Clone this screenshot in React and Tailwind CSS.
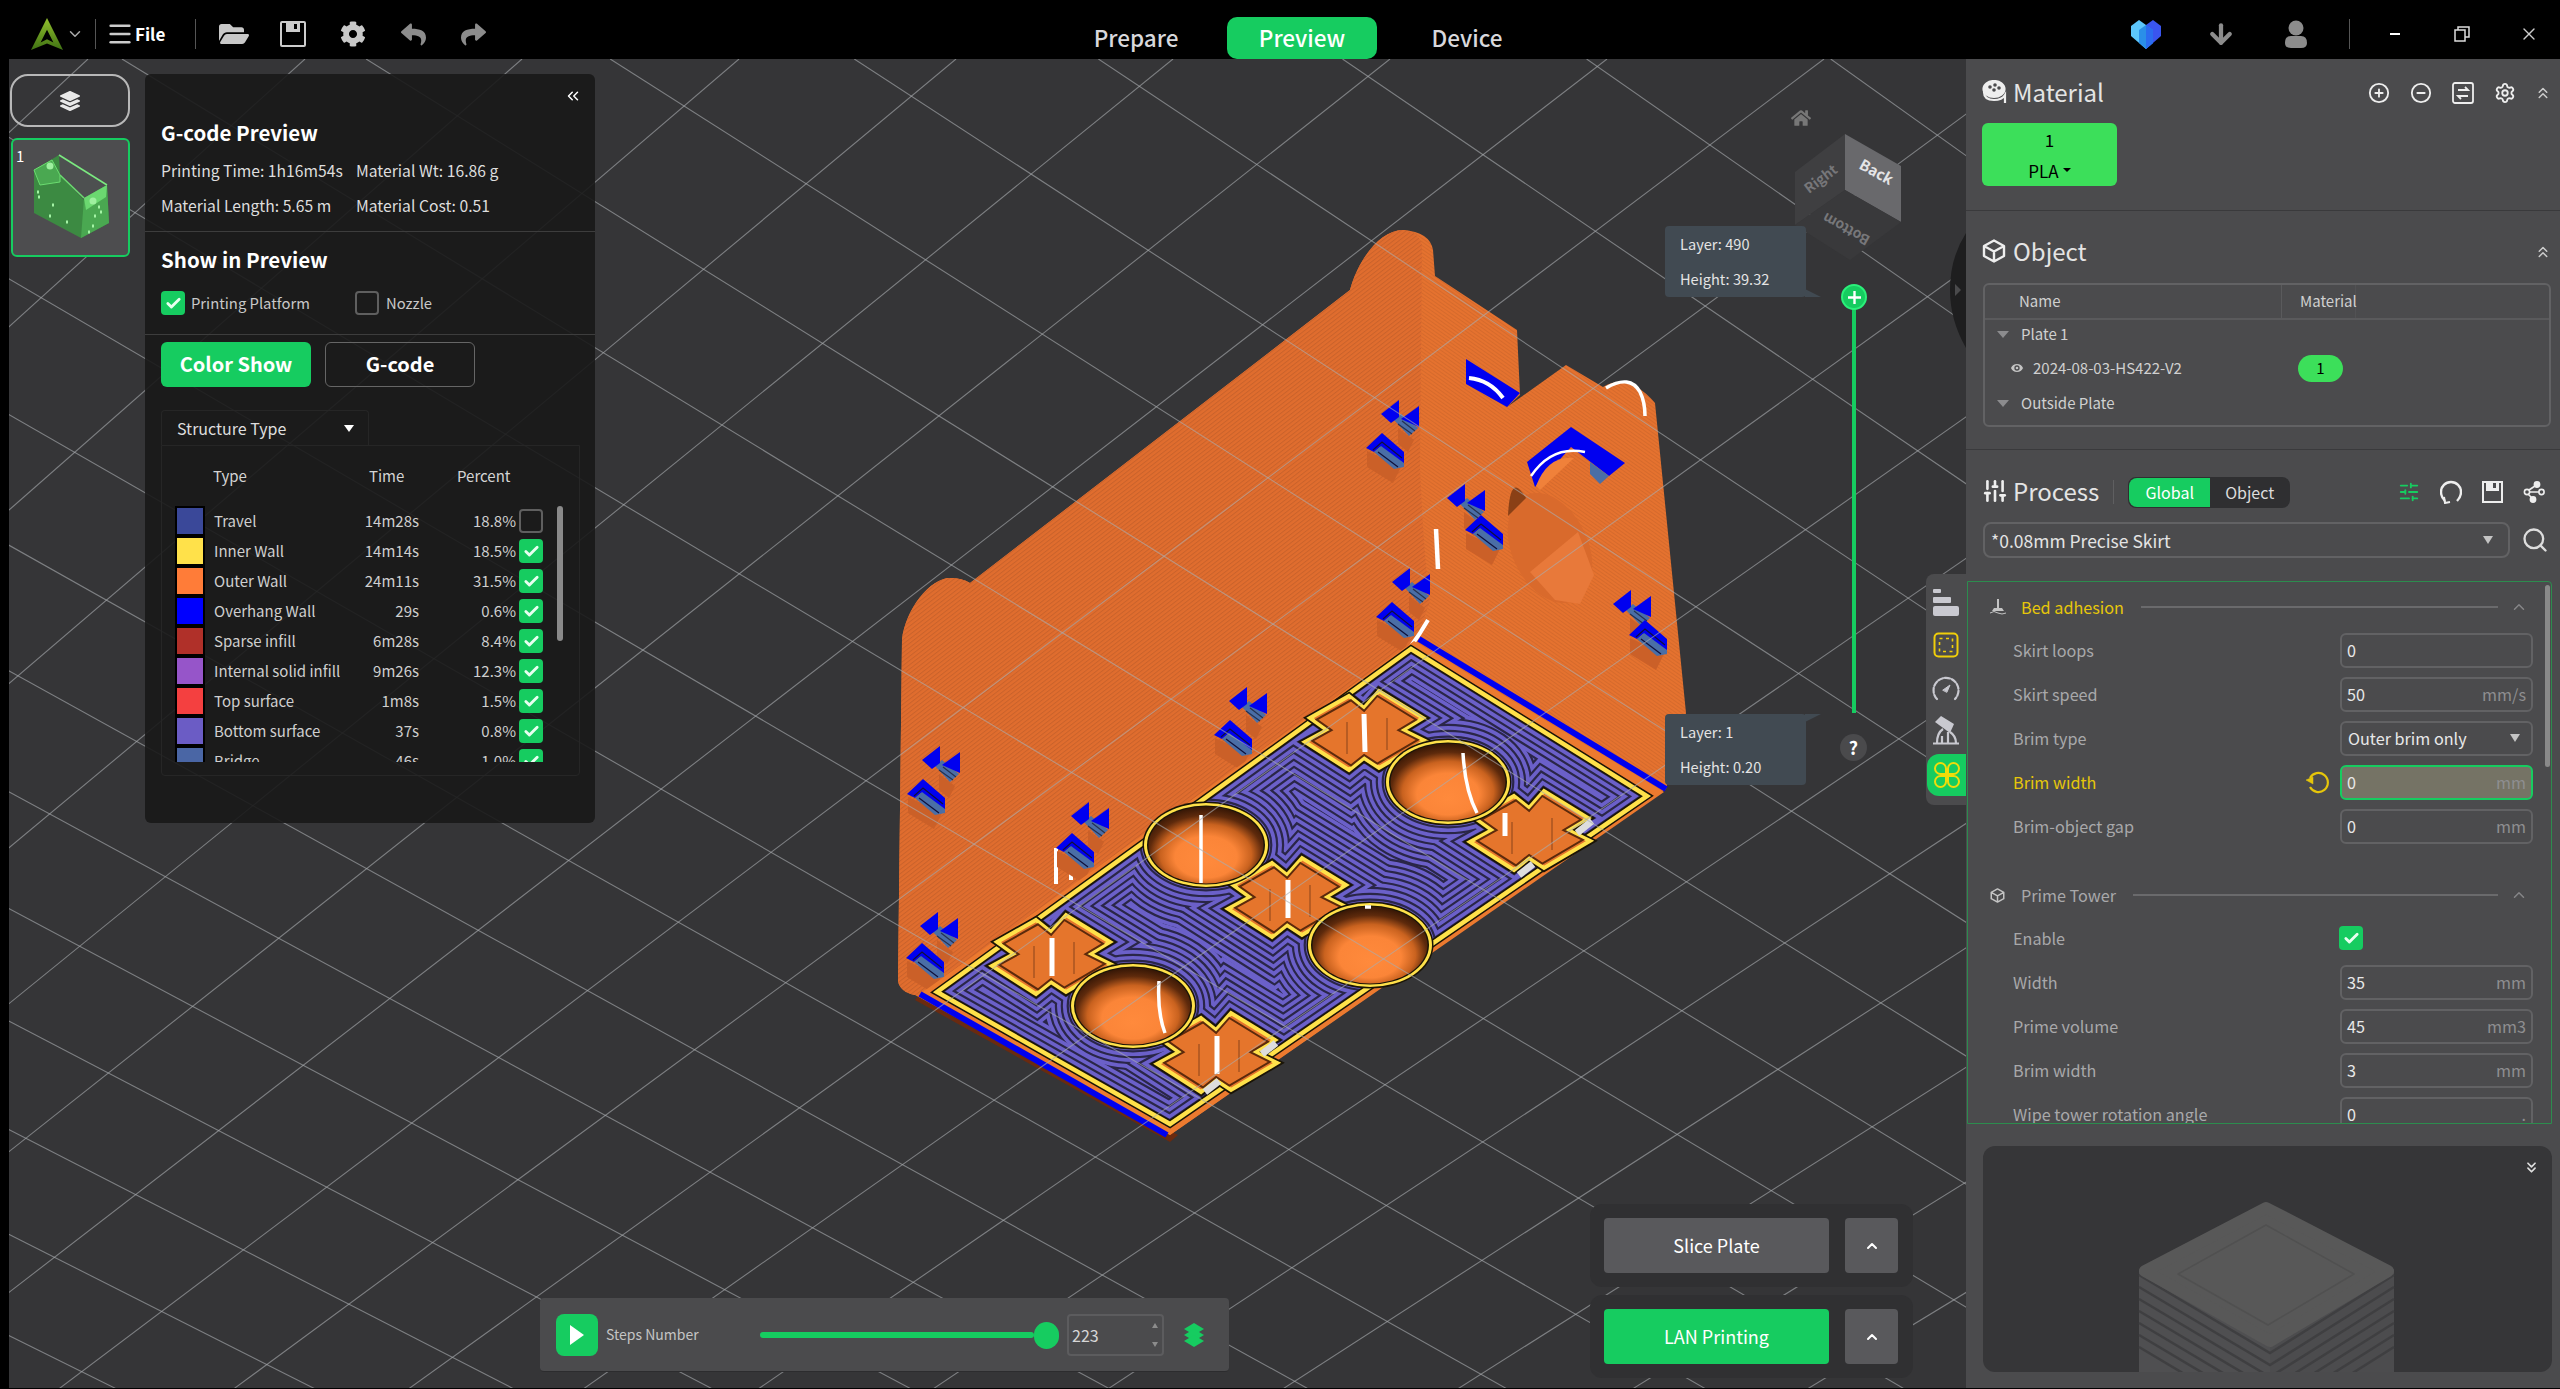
import React from 'react';
import {
  ArrowDown, Check, ChevronDown, ChevronUp, ChevronsDown, ChevronsLeft, ChevronsUp,
  CircleMinus, CirclePlus, Eye, Menu, Search, Settings, SlidersHorizontal, SlidersVertical, X,
} from 'lucide-react';
import { FaCog, FaFolderOpen, FaHome, FaLayerGroup, FaReply, FaShare } from 'react-icons/fa';

const structureRows = [
  { name: 'Travel', time: '14m28s', pct: '18.8%', color: '#3a4899', on: false },
  { name: 'Inner Wall', time: '14m14s', pct: '18.5%', color: '#ffe14a', on: true },
  { name: 'Outer Wall', time: '24m11s', pct: '31.5%', color: '#ff7c38', on: true },
  { name: 'Overhang Wall', time: '29s', pct: '0.6%', color: '#0000ff', on: true },
  { name: 'Sparse infill', time: '6m28s', pct: '8.4%', color: '#b03029', on: true },
  { name: 'Internal solid infill', time: '9m26s', pct: '12.3%', color: '#9655c9', on: true },
  { name: 'Top surface', time: '1m8s', pct: '1.5%', color: '#f44040', on: true },
  { name: 'Bottom surface', time: '37s', pct: '0.8%', color: '#6b5cc5', on: true },
  { name: 'Bridge', time: '46s', pct: '1.0%', color: '#4a66a5', on: true },
];

// model data, all in page pixels
const platePts = '1411,649 1647,796 1170,1124 937,992';
const crossShape = [[-16, -36], [-1, -24], [14, -41], [58, -14], [38, -2], [60, 9], [14, 36], [-1, 26], [-16, 38], [-60, 10], [-38, -2], [-55, -14]];
const crosses = [[1365, 732], [1530, 832], [1288, 899], [1052, 956], [1217, 1054]];
const holes = [[1448, 782], [1206, 845], [1370, 945], [1133, 1006]];
const notches = [
  [1400, 418, 1385, 449], [1466, 502, 1484, 531], [1411, 586, 1395, 618], [1632, 608, 1648, 636],
  [1248, 705, 1233, 736], [941, 764, 926, 795], [1090, 820, 1075, 849], [939, 930, 925, 959],
];
const crossPts = (cx, cy, k = 1) => crossShape.map(([x, y]) => `${cx + x * k},${cy + y * k}`).join(' ');
const infillSteps = Array.from({ length: 25 }, (_, i) => 146 - i * 5.9);

const Outlines = ({ width, color }) => (
  <g fill="none" stroke={color} strokeWidth={width} strokeLinejoin="miter" strokeMiterlimit="12">
    <polygon points={platePts} />
    {holes.map(([x, y]) => <ellipse key={x} cx={x} cy={y} rx="62" ry="42" />)}
    {crosses.map(([x, y]) => <polygon key={x} points={crossPts(x, y)} />)}
  </g>
);

const Notch = ({ n }) => (
  <g>
    <polygon points={`${n[0] - 2},${n[1] + 10} ${n[0] + 14},${n[1] + 22} ${n[0] + 8},${n[1] + 34} ${n[0] - 2},${n[1] + 26}`} fill="#cb6028" />
    <polygon points={`${n[2] - 18},${n[3] + 2} ${n[2] + 16},${n[3] + 18} ${n[2] + 8},${n[3] + 34} ${n[2] - 18},${n[3] + 18}`} fill="#cb6028" />
    <g transform={`translate(${n[0]} ${n[1]})`}>
      <polygon points="-6,2 1,-4 18,10 9,18" fill="#4a6ea6" />
      <polygon points="-19,-4 -1,-18 -1,-1 -9,5" fill="#0000f0" />
      <polygon points="1,1 19,-12 19,9" fill="#0000f0" />
      <path d="M-2 6 L12 16 M2 3 L15 13" stroke="#27324f" strokeWidth="1.2" />
    </g>
    <g transform={`translate(${n[2]} ${n[3]})`}>
      <polygon points="-19,-1 -3,-16 19,3 19,15 -5,-2 -11,3" fill="#0000f0" />
      <polygon points="-11,3 -4,-3 19,14 19,18 9,20" fill="#4a6ea6" />
      <path d="M-7 3 L13 18 M-12 1 L-3 -7 L17 9" stroke="#10103a" strokeWidth="1.2" fill="none" />
    </g>
  </g>
);

const GridLines = () => {
  const back = Array.from({ length: 22 }, (_, n) => 122 + 244.1 * (n - 13));
  const fwd = Array.from({ length: 21 }, (_, n) => 88 + 217 * n);
  return (
    <g stroke="#a9adb0" strokeOpacity="0.62" strokeWidth="1.1">
      {back.map((b) => <line key={b} x1={b} y1="59" x2={b + (1.656 - 0.00014 * b) * 1330} y2="1389" />)}
      {fwd.map((a) => <line key={a} x1={a} y1="59" x2={a - (1.061 + 0.000146 * a) * 1330} y2="1389" />)}
    </g>
  );
};

const Model = () => (
  <svg className="absolute inset-0 w-full h-full" viewBox="9 59 1957 1329">
    <defs>
      <pattern id="wallL" width="3.4" height="3.4" patternUnits="userSpaceOnUse" patternTransform="rotate(-37.6)">
        <rect width="3.4" height="3.4" fill="#e06d2e" />
        <rect width="3.4" height="1" fill="#c9622b" />
      </pattern>
      <pattern id="wallR" width="3" height="3" patternUnits="userSpaceOnUse" patternTransform="rotate(35)">
        <rect width="3" height="3" fill="#e5722f" />
        <rect width="3" height="0.8" fill="#d2682b" />
      </pattern>
      <radialGradient id="holeFill" cx="0.5" cy="0.58" r="0.6" fx="0.5" fy="0.72">
        <stop offset="0" stopColor="#ff8a3c" />
        <stop offset="0.45" stopColor="#fb8538" />
        <stop offset="0.66" stopColor="#c9621f" />
        <stop offset="0.82" stopColor="#5e2a0c" />
        <stop offset="1" stopColor="#2c1204" />
      </radialGradient>
      <clipPath id="plateClip"><polygon points={platePts} /></clipPath>
    </defs>

    <path d="M915 1000 L1170 1142 L1178 1135 L920 994 Z" fill="#6a2a10" />
    <path d="M898 981 L902 640 C905 610 930 578 950 578 Q962 578 970 583 L1350 290 C1358 260 1380 230 1403 230 Q1430 232 1433 250 L1435 276 L1517 330 L1520 395 L1507 407 L1566 365 L1603 387 Q1628 372 1655 403 L1686 713 L1666 789 L1170 1135 L915 995 Q900 992 898 981 Z" fill="url(#wallR)" />
    <path d="M898 981 L902 640 C905 610 930 578 950 578 Q962 578 970 583 L1350 290 C1358 260 1380 230 1403 230 Q1418 231 1422 245 L1420 468 Q1424 560 1430 602 L1414 644 L920 994 L915 995 Q900 992 898 981 Z" fill="url(#wallL)" />

    <ellipse cx="1550" cy="548" rx="38" ry="58" transform="rotate(-25 1550 548)" fill="#d96a2c" />
    <polygon points="1530,572 1578,532 1594,575 1580,604 1555,600" fill="#e8793a" />
    <path d="M1526 498 Q1519 505 1508 516 Q1510 470 1526 498" fill="#8a4016" />

    {/* slot and arch on the right wall */}
    <polygon points="1466,359 1520,393 1507,407 1466,384" fill="#0000f0" />
    <path d="M1469 378 Q1490 380 1503 398" stroke="#fff" strokeWidth="4" fill="none" />
    <polygon points="1527,462 1571,427 1625,463 1609,476 1571,447 1535,487" fill="#0000f0" />
    <path d="M1531 476 Q1552 445 1585 452" stroke="#fff" strokeWidth="2.5" fill="none" />
    <path d="M1536 486 Q1548 455 1574 458 L1540 490 Z" fill="#f0813a" />
    <polygon points="1590,462 1609,476 1600,484 1590,474" fill="#4a6ea6" />
    <path d="M1436 529 L1438 569" stroke="#fff" strokeWidth="4.5" />
    <path d="M1428 620 Q1420 634 1411 646" stroke="#fff" strokeWidth="4" fill="none" />
    <path d="M1606 388 Q1630 374 1640 392 Q1645 402 1645 416" stroke="#fff" strokeWidth="3.5" fill="none" />
    <path d="M1056 848 L1056 884 M1071 862 L1071 880" stroke="#fff" strokeWidth="4" />

    {notches.map((n) => <Notch key={n[0]} n={n} />)}

    {/* plate */}
    <polygon points="1414,641 1664,792 1170,1135 920,994" fill="#ec7a2f" />
    <path d="M1419 639 L1666 789" stroke="#0000f0" strokeWidth="6" />
    <path d="M920 994 L1167 1135" stroke="#0000f0" strokeWidth="6" />
    <g clipPath="url(#plateClip)">
      <polygon points={platePts} fill="#6b60c9" />
      {infillSteps.map((d) => (
        <g key={d}>
          <Outlines width={2 * d} color="#2a2648" />
          <Outlines width={2 * (d - 2.2)} color="#6b60c9" />
        </g>
      ))}
    </g>
    <polygon points={platePts} fill="none" stroke="#1a1406" strokeWidth="7.5" strokeLinejoin="miter" />
    <polygon points={platePts} fill="none" stroke="#ffe14a" strokeWidth="4.5" strokeLinejoin="miter" />

    {crosses.map(([x, y]) => (
      <g key={x}>
        <polygon points={crossPts(x, y)} fill="#e5752c" stroke="#1a1406" strokeWidth="7.5" strokeLinejoin="miter" />
        <polygon points={crossPts(x, y)} fill="#e5752c" stroke="#ffe14a" strokeWidth="4" strokeLinejoin="miter" />
        <polygon points={crossPts(x, y, 0.88)} fill="#e5752c" stroke="#5c2a0c" strokeWidth="2" />
        <path d={`M${x - 18} ${y - 10} L${x - 18} ${y + 22} M${x + 22} ${y - 14} L${x + 22} ${y + 18}`} stroke="#a85420" strokeWidth="1.5" />
      </g>
    ))}
    {holes.map(([x, y]) => (
      <g key={x}>
        <ellipse cx={x} cy={y} rx="63.5" ry="43.5" fill="#1a1406" />
        <ellipse cx={x} cy={y} rx="62" ry="42" fill="#ffe14a" />
        <ellipse cx={x} cy={y} rx="59" ry="39.5" fill="#1a1406" />
        <ellipse cx={x} cy={y} rx="57.5" ry="38.5" fill="url(#holeFill)" />
      </g>
    ))}
    <path d="M1364 714 L1365 752 M1288 880 L1288 918 M1052 938 L1052 976 M1217 1036 L1217 1074 M1505 813 L1505 836" stroke="#fff" strokeWidth="5" />
    <path d="M1463 753 Q1465 790 1477 813 M1201 815 L1201 883 M1159 981 Q1157 1012 1165 1033 M1365 907 L1371 907" stroke="#fff" strokeWidth="3.5" fill="none" />
    <path d="M1577 833 L1592 821 M1519 875 L1533 864 M1262 1054 L1276 1043 M1205 1092 L1219 1081" stroke="#ddd" strokeWidth="7" />

    <GridLines />

    {/* nav cube */}
    <polygon points="1845,134 1795,172 1795,225 1845,190" fill="#3f3f41" />
    <polygon points="1845,134 1901,166 1901,222 1845,190" fill="#69696c" />
    <polygon points="1845,190 1901,222 1850,260 1795,225" fill="#39393b" />
    <text transform="translate(1809 194) rotate(-37)" className="text-[14px] font-bold" fill="#77777a">Right</text>
    <text transform="translate(1858 168) rotate(29)" className="text-[15px] font-bold" fill="#e4e4e6">Back</text>
    <text transform="translate(1871 237) rotate(209)" className="text-[14px] font-bold" fill="#77777a">Bottom</text>
    <path d="M1966 233 Q1950 258 1950 290 Q1950 320 1966 348 Z" fill="#1e1e1f" />
    <path d="M1955 284 L1961 290 L1955 296 Z" fill="#4a4a4c" />
  </svg>
);

const Thumb = () => (
  <svg className="w-full h-full" viewBox="13 140 115 115">
    {/* far inner walls */}
    <polygon points="34,170 59,155 107,185 109,223 81,238 34,213" fill="#3c8a42" />
    <polygon points="59,155 107,185 84,200 60,175" fill="#4d5050" />
    <path d="M59 155 L107 185" stroke="#7bea80" strokeWidth="1.5" />
    <path d="M60 175 L84 198" stroke="#6bdc70" strokeWidth="1.5" />
    <polygon points="34,170 52,160 60,175 60,182 40,185" fill="#4aa851" stroke="#6bdc70" />
    <polygon points="84,198 107,185 109,223 81,238" fill="#4aa851" />
    <polygon points="84,198 107,185 106,197 86,210" fill="#6bd870" />
    <circle cx="50" cy="166" r="3.5" fill="#9ef09f" /><circle cx="93" cy="201" r="3.5" fill="#9ef09f" />
    <path d="M37 192 h2 M38 197 h2 M49 216 h2 M66 222 h2 M52 205 h2 M94 216 h2 M100 212 h2 M92 226 h2 M88 232 h2 M98 207 h2" stroke="#a4f4a5" strokeWidth="3" />
  </svg>
);

const Tick = ({ on }) => (
  on ? (
    <span className="w-6 h-6 rounded bg-[#16cc60] flex items-center justify-center shrink-0">
      <Check size={17} strokeWidth={4} className="text-[#e8fff0]" />
    </span>
  ) : (
    <span className="block w-6 h-6 rounded border-2 border-[#5f5f5f] shrink-0" />
  )
);

const TopBar = () => (
  <div className="h-[59px] bg-black flex items-center relative text-[#c8c8c8] pt-[9px]">
    <svg width="32" height="32" viewBox="0 0 30 30" className="ml-[31px]">
      <defs>
        <linearGradient id="logoG" x1="0" y1="0" x2="0" y2="1">
          <stop offset="0" stopColor="#93c02e" /><stop offset="1" stopColor="#3f7213" />
        </linearGradient>
      </defs>
      <path fillRule="evenodd" d="M15 0 L30 30 L15 24 L0 30 Z M15 11 L21 23 L15 20 L9 23 Z" fill="url(#logoG)" />
    </svg>
    <ChevronDown size={18} className="ml-[3px] text-[#aaa]" />
    <span className="ml-[11px] w-px h-[30px] bg-[#555]" />
    <Menu size={28} strokeWidth={2.2} className="ml-[10px] text-[#ccc]" />
    <span className="ml-[1px] text-[17px] font-bold text-white w-[30px]">File</span>
    <span className="ml-[30px] w-px h-[30px] bg-[#555]" />
    <FaFolderOpen size={30} className="ml-[23px]" />
    <svg width="26" height="26" viewBox="0 0 26 26" className="ml-[31px]">
      <path d="M2 1 H24 Q25 1 25 2 V24 Q25 25 24 25 H2 Q1 25 1 24 V2 Q1 1 2 1 Z" fill="none" stroke="#ccc" strokeWidth="2" />
      <rect x="6" y="1" width="14" height="10" fill="#ccc" />
      <rect x="14" y="3" width="3" height="5" fill="#000" />
    </svg>
    <FaCog size={26} className="ml-[34px]" />
    <FaReply size={25} className="ml-[35px] text-[#8c8c8c]" />
    <FaShare size={25} className="ml-[35px] text-[#8c8c8c]" />

    <div className="absolute left-[1076px] top-[17px] flex text-[22.5px] font-medium">
      <span className="w-[120px] text-center leading-[41px] text-[#d8d8dc]">Prepare</span>
      <span className="ml-[31px] w-[150px] h-[42px] leading-[41px] rounded-[10px] bg-[#16cc60] text-center text-white">Preview</span>
      <span className="ml-[30px] w-[120px] text-center leading-[41px] text-[#d8d8dc]">Device</span>
    </div>

    <div className="ml-auto flex items-center">
      <svg width="30" height="30" viewBox="0 0 30 30">
        <polygon points="0,7 8,1 15,6 15,30 0,17" fill="#5cc6fb" />
        <polygon points="15,6 22,1 30,7 30,17 15,30" fill="#3a55ef" />
        <polygon points="8,11 15,6 22,11 22,24 15,30 8,24" fill="#2a8fe8" />
        <polygon points="15,6 22,11 22,24 15,30" fill="#2b6cf0" />
      </svg>
      <ArrowDown size={30} strokeWidth={3.4} className="ml-[45px] text-[#8c8c8c]" />
      <svg width="22" height="28" viewBox="0 0 22 28" className="ml-[49px]">
        <circle cx="11" cy="8" r="7.5" fill="#8c8c8c" />
        <path d="M0 23 Q0 16 6 16 H16 Q22 16 22 23 Q22 28 16 28 H6 Q0 28 0 23 Z" fill="#8c8c8c" />
      </svg>
      <span className="ml-[42px] w-px h-[30px] bg-[#555]" />
      <span className="ml-[40px] w-[10px] h-[1.5px] bg-white" />
      <svg width="16" height="16" viewBox="0 0 16 16" className="ml-[54px]">
        <rect x="1" y="4" width="10" height="11" fill="none" stroke="#ddd" strokeWidth="1.5" />
        <path d="M4 4 V1 H15 V11 H11" fill="none" stroke="#ddd" strokeWidth="1.5" />
      </svg>
      <X size={20} strokeWidth={1.6} className="ml-[49px] mr-[21px] text-[#ccc]" />
    </div>
  </div>
);

const GcodePanel = () => (
  <div className="absolute left-[136px] top-[15px] w-[450px] h-[749px] rounded-md bg-[#181818]/90 text-[#dedede]">
    <div className="h-[158px] border-b border-[#3d3d3d] pl-4">
      <div className="flex justify-end pt-[13px] pr-[13px]"><ChevronsLeft size={18} className="text-white" /></div>
      <h2 className="mt-[12px] text-[20.5px] font-bold leading-[30px] text-white">G-code Preview</h2>
      <div className="mt-[6px] grid grid-cols-[195px_auto] text-[15.7px] leading-[35px]">
        <span>Printing Time: 1h16m54s</span><span>Material Wt: 16.86 g</span>
        <span>Material Length: 5.65 m</span><span>Material Cost: 0.51</span>
      </div>
    </div>
    <div className="h-[103px] border-b border-[#3d3d3d] pl-4 pt-[12px]">
      <h2 className="text-[20.5px] font-bold leading-[30px] text-white">Show in Preview</h2>
      <div className="mt-[17px] flex items-center text-[14.8px] text-[#c8c8c8]">
        <Tick on />
        <span className="ml-[6px] w-[164px]">Printing Platform</span>
        <Tick on={false} />
        <span className="ml-[7px]">Nozzle</span>
      </div>
    </div>
    <div className="pl-4 pt-[7px] flex gap-[14px] text-[20px] font-bold text-white">
      <button className="w-[150px] h-[45px] pb-[2px] rounded-md bg-[#16cc60]">Color Show</button>
      <button className="w-[150px] h-[45px] pb-[2px] rounded-md border border-[#666]">G-code</button>
    </div>
    <div className="ml-4 mt-[23px] w-[419px] text-[15px]">
      <div className="h-[35px] w-[208px] rounded-t border border-b-0 border-[#262626] flex items-center pl-[15px] pr-[14px] justify-between text-[16px]">
        Structure Type
        <span className="w-0 h-0 border-x-[5px] border-x-transparent border-t-[7px] border-t-white" />
      </div>
      <div className="h-[331px] rounded-b border border-[#262626]">
        <div className="h-[60px] pl-[51px] flex items-center text-[#d4d4d4]">
          <span className="w-[156px]">Type</span><span className="w-[88px]">Time</span><span>Percent</span>
        </div>
        <div className="flex">
          <div className="pl-[13px] w-[383px] h-[256px] overflow-hidden">
            {structureRows.map((r) => (
              <div key={r.name} className="h-[30px] flex items-center text-[#cfcfcf]">
                <span className="w-[30px] h-[30px] bg-black p-[2px] shrink-0">
                  <span className="block w-full h-full" style={{ backgroundColor: r.color }} />
                </span>
                <span className="ml-[9px] w-[145px] whitespace-nowrap">{r.name}</span>
                <span className="w-[60px] text-right">{r.time}</span>
                <span className="w-[97px] text-right">{r.pct}</span>
                <span className="ml-[3px]"><Tick on={r.on} /></span>
              </div>
            ))}
          </div>
          <span className="ml-[12px] w-[6px] h-[135px] rounded-full bg-[#8a8a8a]" />
        </div>
      </div>
    </div>
  </div>
);

const LayerTip = ({ top, layer, height, tail }) => (
  <div className={`absolute left-[1656px] ${top} w-[141px] h-[71px] rounded bg-[#414a52] text-[#e4e4e4] text-[14.6px] pl-[15px] leading-[36px]`}>
    <div className="h-[36px]">Layer: {layer}</div>
    <div className="h-[36px] -mt-px">Height: {height}</div>
    <svg width="16" height="8" viewBox="0 0 16 8" className={`absolute left-[141px] ${tail === 'bottom' ? 'bottom-0' : 'top-0'} -ml-px`}>
      <polygon points={tail === 'bottom' ? '0,0 16,8 0,8' : '0,8 16,0 0,0'} fill="#414a52" />
    </svg>
  </div>
);

const ToolStrip = () => (
  <div className="absolute left-[1917px] top-[515px] w-[40px] h-[231px] rounded-l-lg bg-[#4b4b4d] flex flex-col items-center pt-[15px]">
    <svg width="28" height="28" viewBox="0 0 28 28">
      <rect x="1" y="0" width="8" height="4" rx="1" fill="#c9c9d0" />
      <rect x="1" y="8" width="18" height="6" rx="1" fill="#c9c9d0" />
      <rect x="1" y="17" width="26" height="10" rx="2" fill="#c9c9d0" />
    </svg>
    <svg width="26" height="26" viewBox="0 0 26 26" className="mt-[15px]" fill="none">
      <rect x="1.5" y="1.5" width="23" height="23" rx="4" stroke="#f0ce0a" strokeWidth="2" />
      <rect x="6.5" y="6.5" width="13" height="13" stroke="#f0ce0a" strokeWidth="1.6" strokeDasharray="3 3.5" />
    </svg>
    <svg width="28" height="26" viewBox="0 0 28 26" className="mt-[17px]" fill="none" stroke="#c9c9d0" strokeWidth="2.2" strokeLinecap="round">
      <path d="M5 24 A12.5 12.5 0 1 1 23 24" strokeDasharray="5 2" />
      <path d="M11 15 L18 10 L15 17 Z" fill="#c9c9d0" strokeWidth="1" />
    </svg>
    <svg width="28" height="29" viewBox="0 0 28 29" className="mt-[15px]">
      <polygon points="3,6 9,0 22,8 18,17" fill="#c9c9d0" />
      <path d="M11 13 Q5 17 5 27 M16 16 L16 27 M18 16 Q24 20 24 27 M10 20 L10 27 M1 27.5 H27" stroke="#c9c9d0" strokeWidth="2.2" fill="none" />
    </svg>
    <div className="mt-[9px] ml-[1px] w-[39px] h-[42px] rounded-l-xl bg-[#16cc60] flex items-center justify-center">
      <svg width="26" height="26" viewBox="0 0 26 26" fill="none" stroke="#f0dc0a" strokeWidth="2">
        <path d="M12 12 H6.5 A5.5 5.5 0 1 1 12 6.5 Z M14 12 V6.5 A5.5 5.5 0 1 1 19.5 12 Z M12 14 V19.5 A5.5 5.5 0 1 1 6.5 14 Z M14 14 H19.5 A5.5 5.5 0 1 1 14 19.5 Z" />
      </svg>
    </div>
  </div>
);

const StepsBar = () => (
  <div className="absolute left-[531px] top-[1239px] w-[689px] h-[74px] rounded bg-[#4b4b4d] flex items-center pl-[16px] border-b border-[#2c2c2e]">
    <span className="w-[42px] h-[42px] rounded-lg bg-[#16cc60] flex items-center justify-center">
      <span className="w-0 h-0 border-y-[10px] border-y-transparent border-l-[14px] border-l-white" />
    </span>
    <span className="ml-2 w-[154px] text-[14px] text-[#c4c4c4]">Steps Number</span>
    <span className="relative w-[274px] h-[6px] rounded-full bg-[#16cc60]">
      <span className="absolute left-[274px] -top-[10px] w-[25px] h-[27px] rounded-full bg-[#16cc60]" />
    </span>
    <span className="ml-[33px] w-[97px] h-[42px] rounded border-2 border-[#5c5c5e] flex items-center justify-between pl-[3px] pr-[4px] text-[16px] text-[#d6d6d6]">
      223
      <span className="flex flex-col gap-[14px]">
        <span className="w-0 h-0 border-x-[3px] border-x-transparent border-b-[5px] border-b-[#8c8c8c]" />
        <span className="w-0 h-0 border-x-[3px] border-x-transparent border-t-[5px] border-t-[#8c8c8c]" />
      </span>
    </span>
    <svg width="24" height="24" viewBox="0 0 24 24" className="ml-[18px]" fill="#16cc60">
      <polygon points="12,0 22,6 12,12 2,6" /><polygon points="12,6 22,12 12,18 2,12" /><polygon points="12,12 22,18 12,24 2,18" />
    </svg>
  </div>
);

const ActionGroup = ({ top, label, primary }) => (
  <div className={`absolute left-[1581px] ${top} w-[323px] h-[83px] rounded-xl bg-[#303032] flex items-center pl-[14px] gap-[16px] text-[18px] text-white`}>
    <button className={`w-[225px] h-[55px] rounded ${primary ? 'bg-[#16cc60]' : 'bg-[#59595c]'}`}>{label}</button>
    <button className="w-[53px] h-[55px] rounded bg-[#59595c] flex items-center justify-center">
      <ChevronUp size={16} strokeWidth={3} className="text-white" />
    </button>
  </div>
);

const Viewport = () => (
  <div className="relative flex-1 bg-[#353537] overflow-hidden">
    <Model />
    <div className="absolute left-[1px] top-[15px] w-[120px] h-[53px] rounded-[18px] border-2 border-[#b8b8b8] flex items-center justify-center">
      <FaLayerGroup size={20} className="text-[#e8e8e8]" />
    </div>
    <div className="absolute left-[2px] top-[79px] w-[119px] h-[119px] rounded-md border-2 border-[#16cc60] bg-[#4d4d4f] overflow-hidden">
      <span className="absolute left-[3px] top-[5px] text-[15px] text-white z-10">1</span>
      <Thumb />
    </div>
    <GcodePanel />
    <FaHome size={20} className="absolute left-[1782px] top-[49px] text-[#777]" />
    <LayerTip top="top-[167px]" layer="490" height="39.32" tail="bottom" />
    <LayerTip top="top-[655px]" layer="1" height="0.20" tail="top" />
    <div className="absolute left-[1843px] top-[238px] w-[4px] h-[416px] bg-[#16cc60]" />
    <div className="absolute left-[1832px] top-[225px] w-[26px] h-[26px] rounded-full bg-[#16cc60] border-2 border-[#2bf07a] flex items-center justify-center text-white text-[22px] leading-none">
      <svg width="13" height="13" viewBox="0 0 13 13"><path d="M6.5 0 V13 M0 6.5 H13" stroke="#fff" strokeWidth="2.4" /></svg>
    </div>
    <div className="absolute left-[1831px] top-[675px] w-[27px] h-[27px] rounded-full bg-[#4a4a4c] flex items-center justify-center text-white font-bold text-[18px]">?</div>
    <ToolStrip />
    <StepsBar />
    <ActionGroup top="top-[1145px]" label="Slice Plate" />
    <ActionGroup top="top-[1236px]" label="LAN Printing" primary />
  </div>
);

const Spool = () => (
  <svg width="26" height="24" viewBox="0 0 26 24" fill="none" stroke="#eee" strokeWidth="2.2">
    <ellipse cx="12" cy="9" rx="10.5" ry="8" fill="#eee" />
    <circle cx="8" cy="7" r="1.8" fill="#4b4b4d" stroke="none" /><circle cx="13" cy="5" r="1.8" fill="#4b4b4d" stroke="none" />
    <circle cx="17" cy="8" r="1.8" fill="#4b4b4d" stroke="none" /><circle cx="12" cy="10" r="1.8" fill="#4b4b4d" stroke="none" />
    <path d="M2 12 Q2 20 12 20 Q20 20 23 15 V23" />
  </svg>
);

const Cube = ({ size = 24, color = '#eee' }) => (
  <svg width={size} height={size} viewBox="0 0 24 24" fill="none" stroke={color} strokeWidth="2.4" strokeLinejoin="round">
    <path d="M12 1.5 L22 7 V17 L12 22.5 L2 17 V7 Z M2 7 L12 12.5 L22 7 M12 12.5 V22.5" />
  </svg>
);

const PanelTitle = ({ icon, children }) => (
  <div className="h-[40px] pb-[2px] flex items-center text-[24px] text-[#e4e4e4] font-normal">
    <span className="w-[31px] flex">{icon}</span>{children}
  </div>
);

const Field = ({ label, value, unit, active }) => (
  <div className="h-[44px] flex items-center pl-[45px] pr-[18px] text-[16.2px] shrink-0">
    <span className={`flex-1 ${active ? 'text-[#e6c60a]' : 'text-[#a8a8aa]'}`}>{label}</span>
    {active && (
      <svg width="24" height="24" viewBox="0 0 24 24" className="mr-[11px]" fill="none" stroke="#e6c60a" strokeWidth="2.2">
        <path d="M5 8 A9.5 9.5 0 1 1 5 17" /><path d="M1 10 L8 7 L8 14 Z" fill="#e6c60a" strokeWidth="0.5" />
      </svg>
    )}
    <span className={`w-[193px] h-[35px] rounded-md flex items-center justify-between pl-[5px] pr-[5px] border-2 ${active ? 'border-[#16cc60] bg-[#757365]' : 'border-[#626264]'}`}>
      <span className="text-[#e8e8e8]">{value}</span>
      <span className="text-[#8e8e90]">{unit}</span>
    </span>
  </div>
);

const SectionHead = ({ icon, title, yellow, textWidth }) => (
  <div className="h-[28px] flex items-center pl-[22px] pr-[23px] text-[16.2px]">
    <span className="w-[31px] flex">{icon}</span>
    <span className={`shrink-0 ${textWidth} ${yellow ? 'text-[#e6c60a]' : 'text-[#a8a8aa]'}`}>{title}</span>
    <span className="flex-1 h-[2px] bg-[#6a6a6c]" />
    <ChevronUp size={18} className="ml-[12px] text-[#858587]" />
  </div>
);

const RightPanel = () => (
  <div className="w-[594px] bg-[#4b4b4d] text-[#e4e4e4]">
    <div className="h-[152px] border-b border-[#3a3a3c] pl-4 pt-[14px]">
      <div className="flex items-center pr-[8px]">
        <PanelTitle icon={<Spool />}>Material</PanelTitle>
        <div className="ml-auto flex items-center gap-[20px] text-[#eee]">
          <CirclePlus size={22} /><CircleMinus size={22} />
          <svg width="22" height="22" viewBox="0 0 22 22" fill="none" stroke="#eee" strokeWidth="1.8">
            <rect x="1" y="1" width="20" height="20" rx="2" /><path d="M6 8 H16 L13 5 M16 14 H6 L9 17" />
          </svg>
          <Settings size={22} />
          <ChevronsUp size={18} className="ml-[-2px] text-[#ccc]" />
        </div>
      </div>
      <div className="mt-[10px] w-[135px] h-[63px] rounded-md bg-[#3cdf5a] flex flex-col items-center justify-center text-[17px] text-black leading-[31px]">
        <span>1</span>
        <span className="flex items-center gap-[4px]">PLA<span className="w-0 h-0 border-x-[4px] border-x-transparent border-t-[4px] border-t-black" /></span>
      </div>
    </div>

    <div className="h-[239px] border-b border-[#3a3a3c] pl-4 pt-[21px]">
      <div className="flex items-center pr-[8px]">
        <PanelTitle icon={<Cube />}>Object</PanelTitle>
        <ChevronsUp size={18} className="ml-auto text-[#ccc]" />
      </div>
      <div className="ml-[1px] mt-[11px] w-[568px] h-[144px] rounded-md border-2 border-[#626264] text-[15px] text-[#d0d0d0]">
        <div className="h-[35px] border-b-2 border-[#5a5a5c] flex items-center">
          <span className="pl-[34px] w-[297px] h-full flex items-center border-r border-[#5a5a5c]">Name</span>
          <span className="pl-[18px] w-[74px] h-full flex items-center border-r border-[#525254]">Material</span>
        </div>
        <div className="h-[29px] flex items-center pl-[12px]">
          <span className="w-0 h-0 border-x-[6px] border-x-transparent border-t-[7px] border-t-[#8c8c8e]" />
          <span className="ml-[12px]">Plate 1</span>
        </div>
        <div className="h-[36px] flex items-center pl-[24px] pt-[2px]">
          <Eye size={16} fill="#c4c4c4" className="text-[#4b4b4d]" />
          <span className="ml-[8px] w-[265px]">2024-08-03-HS422-V2</span>
          <span className="w-[45px] h-[27px] rounded-full bg-[#3cdf5a] text-black flex items-center justify-center">1</span>
        </div>
        <div className="h-[36px] flex items-center pl-[12px]">
          <span className="w-0 h-0 border-x-[6px] border-x-transparent border-t-[7px] border-t-[#8c8c8e]" />
          <span className="ml-[12px]">Outside Plate</span>
        </div>
      </div>
    </div>

    <div className="pt-[22px]">
      <div className="pl-4 pr-[15px] flex items-center">
        <PanelTitle icon={<SlidersVertical size={26} strokeWidth={2.4} className="text-[#eee]" />}>Process</PanelTitle>
        <span className="ml-[14px] w-px h-[24px] bg-[#5f5f61]" />
        <div className="ml-[14px] w-[162px] h-[31px] rounded-lg bg-[#2f2f31] flex items-center p-px text-[16px] text-[#dcdcdc]">
          <span className="w-[81px] h-[29px] rounded-l-lg bg-[#16cc60] text-center leading-[28px] text-white">Global</span>
          <span className="flex-1 text-center">Object</span>
        </div>
        <div className="ml-auto flex items-center gap-[20px] text-[#eee]">
          <SlidersHorizontal size={22} className="text-[#16cc60]" />
          <svg width="22" height="24" viewBox="0 0 22 24" fill="none" stroke="#eee" strokeWidth="2.4">
            <path d="M5 21 Q1 17 1 12 A10 10 0 0 1 21 12 Q21 17 17 21" /><path d="M4 17 L5 23 L10 22" strokeWidth="2" />
          </svg>
          <svg width="21" height="22" viewBox="0 0 21 22" fill="none" stroke="#eee" strokeWidth="2">
            <rect x="1" y="1" width="19" height="20" /><rect x="5" y="1" width="11" height="8" fill="#eee" /><rect x="11" y="2" width="3" height="5" fill="#4b4b4d" stroke="none" />
          </svg>
          <svg width="22" height="22" viewBox="0 0 22 22" fill="#eee" stroke="#eee" strokeWidth="1.6">
            <circle cx="14" cy="3.5" r="2.6" /><circle cx="18.5" cy="11" r="2.6" fill="none" /><circle cx="4" cy="11" r="2.6" fill="none" /><circle cx="10" cy="18.5" r="2.6" />
            <path d="M12 5 L6 9 M7 11 H16 M5 13 L9 17" fill="none" />
          </svg>
        </div>
      </div>
      <div className="mt-[10px] pl-[17px] flex items-center">
        <div className="w-[527px] h-[36px] rounded-lg border-2 border-[#626264] flex items-center justify-between pl-[6px] pr-[15px] text-[17.5px]">
          <span className="pt-[2px]">*0.08mm Precise Skirt</span>
          <span className="w-0 h-0 border-x-[5px] border-x-transparent border-t-[8px] border-t-[#c4c4c4]" />
        </div>
        <Search size={28} strokeWidth={2} className="ml-[11px] text-[#ddd]" />
      </div>

      <div className="relative mt-[23px] ml-px w-[585px] h-[543px] rounded-tr border border-[#2c8c4e] overflow-hidden pt-[11px]">
        <span className="absolute right-[1px] top-[3px] w-[5px] h-[182px] rounded-full bg-[#8a8a8a]" />
        <SectionHead
          yellow
          title="Bed adhesion"
          textWidth="w-[120px]"
          icon={
            <svg width="16" height="16" viewBox="0 0 16 16" fill="#c4c4c4">
              <rect x="7" y="0" width="2" height="9" /><polygon points="4,9 12,9 14,12 2,12" />
              <path d="M0 14 Q4 11 8 14 Q12 16 16 14" stroke="#c4c4c4" fill="none" />
            </svg>
          }
        />
        <div className="mt-[7px]">
          <Field label="Skirt loops" value="0" />
          <Field label="Skirt speed" value="50" unit="mm/s" />
          <div className="h-[44px] flex items-center pl-[45px] pr-[18px] text-[16.2px]">
            <span className="flex-1 text-[#a8a8aa]">Brim type</span>
            <span className="w-[193px] h-[35px] rounded-md border-2 border-[#626264] flex items-center justify-between pl-[6px] pr-[11px] text-[#e8e8e8]">
              Outer brim only
              <span className="w-0 h-0 border-x-[5px] border-x-transparent border-t-[8px] border-t-[#c4c4c4]" />
            </span>
          </div>
          <Field active label="Brim width" value="0" unit="mm" />
          <Field label="Brim-object gap" value="0" unit="mm" />
        </div>
        <div className="mt-[33px]">
          <SectionHead title="Prime Tower" textWidth="w-[112px]" icon={<Cube size={15} color="#c4c4c4" />} />
        </div>
        <div className="mt-[7px]">
          <div className="h-[44px] flex items-center pl-[45px] text-[16.2px] text-[#a8a8aa]">
            <span className="w-[326px]">Enable</span><Tick on />
          </div>
          <Field label="Width" value="35" unit="mm" />
          <Field label="Prime volume" value="45" unit="mm3" />
          <Field label="Brim width" value="3" unit="mm" />
          <Field label="Wipe tower rotation angle" value="0" unit="." />
        </div>
      </div>

      <div className="relative mt-[22px] ml-[17px] w-[569px] h-[226px] rounded-xl bg-[#363638] overflow-hidden">
        <svg className="absolute inset-0 w-full h-full" viewBox="1983 1147 569 226">
          <polygon points="2139,1270 2270,1348 2270,1373 2139,1373" fill="#4f4f51" />
          <polygon points="2270,1348 2394,1270 2394,1373 2270,1373" fill="#4c4c4e" />
          {[6, 18, 30, 42, 54, 66, 78].map((d) => (
            <path key={d} d={`M2139 ${1270 + d} L2270 ${1348 + d} L2394 ${1270 + d}`} stroke="#3f3f41" strokeWidth="2.5" fill="none" />
          ))}
          <polygon points="2266,1209 2388,1272 2270,1342 2145,1272" fill="#585858" stroke="#585858" strokeWidth="12" strokeLinejoin="round" />
          <polygon points="2266,1226 2354,1275 2268,1326 2178,1275" fill="none" stroke="#505050" strokeWidth="1.5" strokeLinejoin="round" />
        </svg>
        <ChevronsDown size={17} strokeWidth={2.4} className="absolute right-[12px] top-[13px] text-[#ddd]" />
      </div>
    </div>
  </div>
);

export default function App() {
  return (
    <div className="w-[2560px] h-[1389px] bg-black overflow-hidden font-['Noto_Sans_CJK_SC','Noto_Sans',sans-serif]">
      <TopBar />
      <div className="h-[1329px] flex">
        <div className="w-[9px] bg-black" />
        <Viewport />
        <RightPanel />
      </div>
    </div>
  );
}
